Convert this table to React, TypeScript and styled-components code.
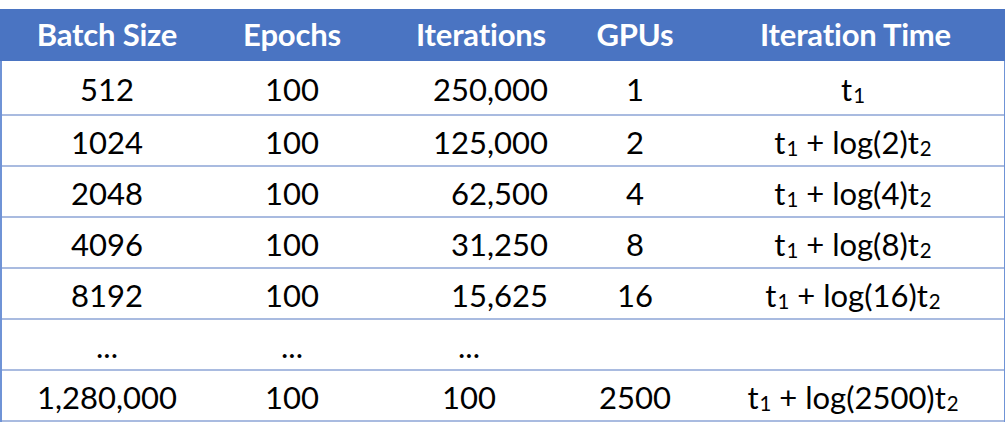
import React from "react";
import styled, { createGlobalStyle } from "styled-components";

const GlobalStyle = createGlobalStyle`
  html, body {
    margin: 0;
    padding: 0;
    background: #ffffff;
  }
  body {
    font-family: Lato, "Open Sans", sans-serif;
  }
`;

const Page = styled.div`
  width: 1008px;
  height: 440px;
  padding-top: 9px;
  box-sizing: border-box;
`;

const Table = styled.div`
  width: 1005px;
  border-left: 2px solid #6f93d6;
  border-right: 1px solid #6f93d6;
  box-sizing: border-box;
`;

const cols = "210px 160px 218px 90px 1fr";

const HeadRow = styled.div`
  display: grid;
  grid-template-columns: ${cols};
  height: 52px;
  background-color: #4a74c2;
  margin-left: -2px;
  margin-right: -1px;
  padding-left: 2px;
`;

const HeadCell = styled.div<{ $shift?: number }>`
  display: flex;
  align-items: center;
  justify-content: center;
  color: #ffffff;
  font-weight: 700;
  font-size: 31px;
  letter-spacing: -0.2px;
  padding-bottom: 2px;
  padding-left: ${(p) => (p.$shift && p.$shift > 0 ? p.$shift : 0)}px;
  padding-right: ${(p) => (p.$shift && p.$shift < 0 ? -p.$shift : 0)}px;
`;

const Row = styled.div<{ $first?: boolean }>`
  display: grid;
  grid-template-columns: ${cols};
  height: ${(p) => (p.$first ? "55px" : "51px")};
  border-bottom: 2px solid #a9bbe0;
  box-sizing: border-box;
`;

const Cell = styled.div<{ $align?: "center" | "right"; $shift?: number }>`
  display: flex;
  align-items: center;
  justify-content: ${(p) => (p.$align === "right" ? "flex-end" : "center")};
  color: #000000;
  font-size: 31px;
  padding-top: 2px;
  padding-left: ${(p) => (p.$shift && p.$shift > 0 ? p.$shift : 0)}px;
  padding-right: ${(p) => (p.$shift && p.$shift < 0 ? -p.$shift : 0)}px;
  white-space: pre;
`;

const Sub = styled.span`
  font-size: 0.66em;
  position: relative;
  top: 0.3em;
  margin-left: 1px;
`;

type R = {
  batch: string;
  epochs: string;
  iters: string;
  itersCentered?: boolean;
  gpus: string;
  log?: string;
  first?: boolean;
};

const rows: R[] = [
  { batch: "512", epochs: "100", iters: "250,000", gpus: "1", first: true },
  { batch: "1024", epochs: "100", iters: "125,000", gpus: "2", log: "2" },
  { batch: "2048", epochs: "100", iters: "62,500", gpus: "4", log: "4" },
  { batch: "4096", epochs: "100", iters: "31,250", gpus: "8", log: "8" },
  { batch: "8192", epochs: "100", iters: "15,625", gpus: "16", log: "16" },
  { batch: "...", epochs: "...", iters: "...", itersCentered: true, gpus: "" },
  {
    batch: "1,280,000",
    epochs: "100",
    iters: "100",
    itersCentered: true,
    gpus: "2500",
    log: "2500",
  },
];

function IterTime({ r }: { r: R }) {
  if (r.first)
    return (
      <>
        t<Sub>1</Sub>
      </>
    );
  if (!r.log) return null;
  return (
    <>
      t<Sub>1</Sub> + log({r.log})t<Sub>2</Sub>
    </>
  );
}

export default function App() {
  return (
    <Page>
      <GlobalStyle />
      <Table>
        <HeadRow>
          <HeadCell>Batch Size</HeadCell>
          <HeadCell>Epochs</HeadCell>
          <HeadCell>Iterations</HeadCell>
          <HeadCell>GPUs</HeadCell>
          <HeadCell $shift={26}>Iteration Time</HeadCell>
        </HeadRow>
        {rows.map((r, i) => (
          <Row key={i} $first={r.first}>
            <Cell>{r.batch}</Cell>
            <Cell>{r.epochs}</Cell>
            {r.itersCentered ? (
              <Cell $shift={-24}>{r.iters}</Cell>
            ) : (
              <Cell $align="right" $shift={-42}>
                {r.iters}
              </Cell>
            )}
            <Cell>{r.gpus}</Cell>
            <Cell $shift={22}>
              <IterTime r={r} />
            </Cell>
          </Row>
        ))}
      </Table>
    </Page>
  );
}
